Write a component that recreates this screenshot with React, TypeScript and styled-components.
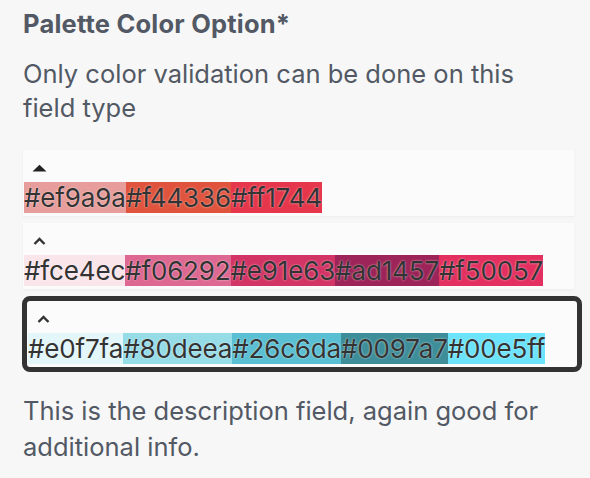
import React from 'react';
import styled, { createGlobalStyle } from 'styled-components';

const GlobalStyle = createGlobalStyle`
  html, body {
    margin: 0;
    padding: 0;
    background: #f7f7f7;
  }
  body {
    font-family: Inter, "Noto Sans", "Liberation Sans", sans-serif;
  }
`;

// hex label and the tone it shows on screen
const palettes: [string, string][][] = [
  [['#ef9a9a', '#e69d9b'], ['#f44336', '#e0543e'], ['#ff1744', '#e6364b']],
  [
    ['#fce4ec', '#fae5eb'],
    ['#f06292', '#dd6891'],
    ['#e91e63', '#d23465'],
    ['#ad1457', '#9d2458'],
    ['#f50057', '#e33060'],
  ],
  [
    ['#e0f7fa', '#e3f6f9'],
    ['#80deea', '#96dce7'],
    ['#26c6da', '#5abfd2'],
    ['#0097a7', '#3e8e99'],
    ['#00e5ff', '#6be3fb'],
  ],
];

const Field = styled.div`
  width: 551px;
  padding: 9px 0 0 23px;
`;

const Title = styled.h3`
  margin: 0;
  font-size: 25.5px;
  line-height: 30px;
  font-weight: 700;
  letter-spacing: 0.2px;
  color: #525964;
`;

const Hint = styled.p`
  max-width: 528px;
  margin: 18px 0 0;
  font-size: 25.5px;
  line-height: 34px;
  color: #525964;
`;

const Options = styled.div`
  display: flex;
  flex-direction: column;
  gap: 7px;
  margin-top: 25px;
`;

const Option = styled.div<{ $selected?: boolean }>`
  box-sizing: border-box;
  display: flex;
  flex-direction: column;
  align-items: flex-start;
  gap: 10px;
  padding: 14px 0 3px 1px;
  background: #fbfbfb;
  box-shadow: 0 1px 3px rgba(0, 0, 0, 0.05);
  ${p => p.$selected && `
    width: calc(100% + 9px);
    margin-left: -1px;
    border: 5px solid #333;
    border-radius: 8px;
    box-shadow: none;
  `}
`;

const Caret = styled.svg`
  display: block;
  width: 15px;
  height: 8px;
  margin-left: 8px;
`;

const Swatches = styled.div`
  display: flex;
`;

const Swatch = styled.span<{ $color: string }>`
  display: block;
  height: 31px;
  line-height: 32px;
  font-size: 26px;
  letter-spacing: -0.15px;
  color: #333;
  background: ${p => p.$color};
  text-shadow: 0 0 2px rgba(255, 255, 255, 0.75);
`;

const Description = styled.p`
  max-width: 528px;
  margin: 21px 0 0;
  font-size: 25.5px;
  line-height: 36px;
  color: #525964;
`;

const FilledCaret = () => (
  <Caret viewBox="0 0 15 8">
    <path d="M7.5 0.8 L14.5 7.6 L0.5 7.6 Z" fill="#222" />
  </Caret>
);

const ChevronCaret = () => (
  <Caret viewBox="0 0 15 8">
    <path d="M2.5 7 L7.5 2 L12.5 7" fill="none" stroke="#333" strokeWidth="2.4" />
  </Caret>
);

export default function App() {
  return (
    <>
      <GlobalStyle />
      <Field>
        <Title>Palette Color Option*</Title>
        <Hint>Only color validation can be done on this field type</Hint>
        <Options>
          {palettes.map((colors, i) => (
            <Option key={i} $selected={i === 2}>
              {i === 0 ? <FilledCaret /> : <ChevronCaret />}
              <Swatches>
                {colors.map(([hex, shown]) => (
                  <Swatch key={hex} $color={shown}>{hex}</Swatch>
                ))}
              </Swatches>
            </Option>
          ))}
        </Options>
        <Description>This is the description field, again good for additional info.</Description>
      </Field>
    </>
  );
}
